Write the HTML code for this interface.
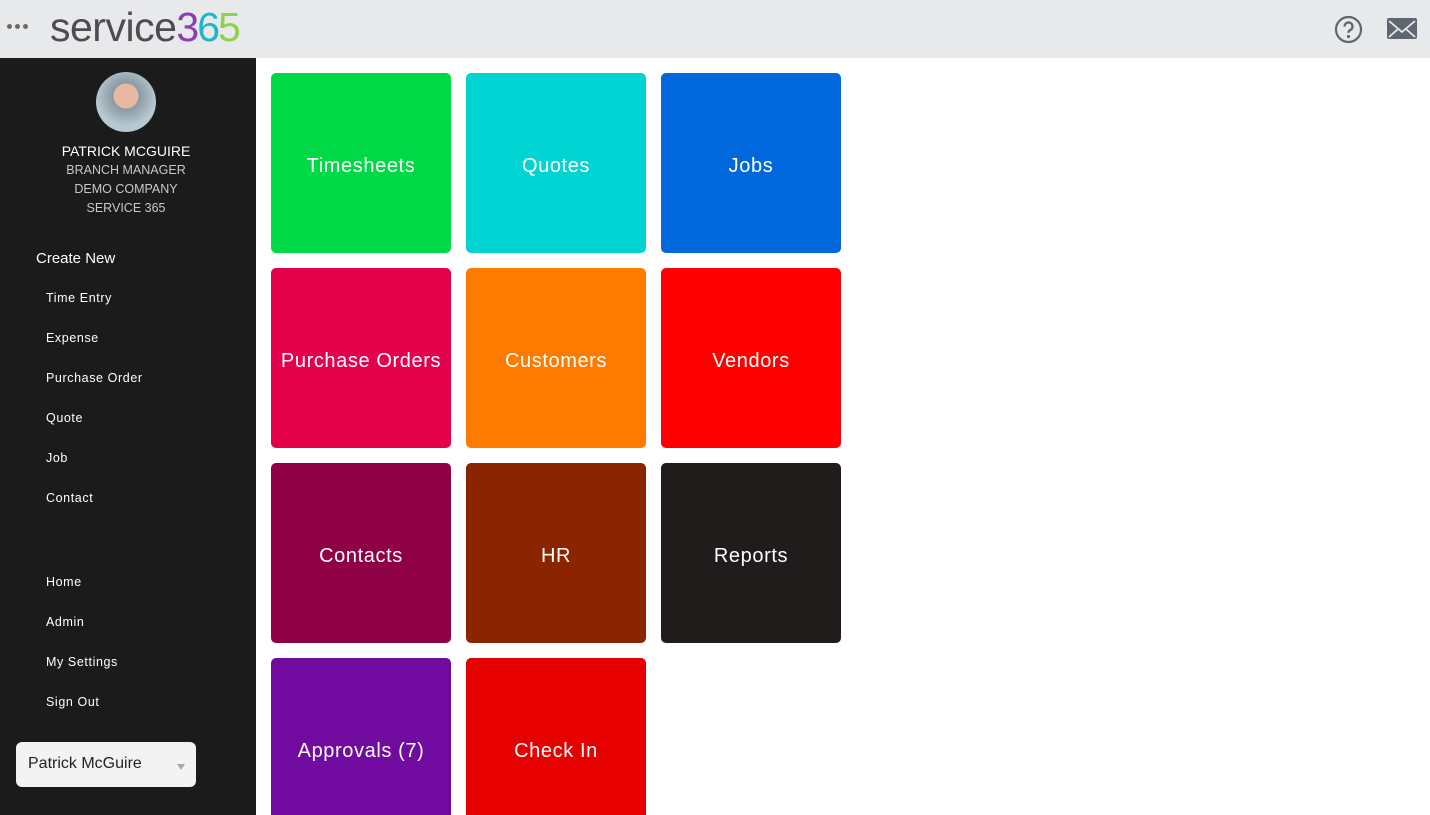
<!DOCTYPE html>
<html style="width:1430px;height:815px;overflow:hidden"><head><meta charset="utf-8"><style>
*{margin:0;padding:0;box-sizing:border-box}
body{width:1430px;height:815px;overflow:hidden;background:#fff;font-family:"Liberation Sans",sans-serif;position:relative}
.top{position:absolute;left:0;top:0;width:1430px;height:58px;background:#e8e9eb}
.dots{position:absolute;left:7px;top:24px;height:5px;line-height:0}
.dots span{display:inline-block;width:5px;height:5px;border-radius:50%;background:#6b6b6b;margin-right:3px;vertical-align:top}
.logo{position:absolute;left:50px;top:4px;font-family:"Liberation Sans",sans-serif;font-size:41px;color:#4d4d4f;letter-spacing:-0.5px}
.side{position:absolute;left:0;top:58px;width:256px;height:757px;background:#1b1b1b;color:#fff}
.av{position:absolute;left:96px;top:14px;width:60px;height:60px;border-radius:50%;background:radial-gradient(circle at 50% 40%,#e8b9a0 0 12px,#8a9aa5 13px,#b7c8d0 30px)}
.name{position:absolute;left:0;width:252px;text-align:center;top:85px;font-size:14px}
.sub{position:absolute;left:0;width:252px;text-align:center;font-size:12.5px;color:#c8c8c8}
.cn{position:absolute;left:36px;top:192px;font-size:15px}
.it{position:absolute;left:46px;font-size:12.5px;letter-spacing:0.6px}
.sel{position:absolute;left:16px;top:684px;width:180px;height:45px;background:#f3f3f3;border-radius:6px;color:#222;font-family:"Liberation Sans",sans-serif;font-size:16px;padding:13px 0 0 12px}
.sel i{position:absolute;right:11px;top:22px;border:4px solid transparent;border-top:6px solid #aaa}
.t{position:absolute;width:180px;height:180px;border-radius:5px;color:#fff;font-size:20px;letter-spacing:0.6px;display:flex;align-items:center;justify-content:center;padding-top:7px}
</style></head><body>
<div class="top">
<div class="dots"><span></span><span></span><span></span></div>
<div class="logo">service<span style="color:#8b3fb0;letter-spacing:-2px">3</span><span style="color:#1eb6c8;letter-spacing:-2px">6</span><span style="color:#8dd24a">5</span></div>
<svg style="position:absolute;left:1334px;top:15px" width="29" height="29" viewBox="0 0 29 29"><circle cx="14.5" cy="14.5" r="12.5" fill="none" stroke="#5f6670" stroke-width="2.2"/><path d="M10.5 11.5a4 4 0 1 1 5.5 3.7c-1.2.6-1.5 1.2-1.5 2.6" fill="none" stroke="#5f6670" stroke-width="2.4"/><circle cx="14.5" cy="21.5" r="1.6" fill="#5f6670"/></svg>
<svg style="position:absolute;left:1387px;top:18px" width="30" height="21" viewBox="0 0 30 21"><rect width="30" height="21" rx="2" fill="#5f6670"/><path d="M2 3l13 11L28 3M2 19l9-8M28 19l-9-8" fill="none" stroke="#e8e9eb" stroke-width="1.8"/></svg>
</div>
<div class="side">
<div class="av"></div>
<div class="name">PATRICK MCGUIRE</div>
<div class="sub" style="top:105px">BRANCH MANAGER</div>
<div class="sub" style="top:124px">DEMO COMPANY</div>
<div class="sub" style="top:143px">SERVICE 365</div>
<div class="cn">Create New</div>
<div class="it" style="top:233px">Time Entry</div>
<div class="it" style="top:273px">Expense</div>
<div class="it" style="top:313px">Purchase Order</div>
<div class="it" style="top:353px">Quote</div>
<div class="it" style="top:393px">Job</div>
<div class="it" style="top:433px">Contact</div>
<div class="it" style="top:517px">Home</div>
<div class="it" style="top:557px">Admin</div>
<div class="it" style="top:597px">My Settings</div>
<div class="it" style="top:637px">Sign Out</div>
<div class="sel">Patrick McGuire<i></i></div>
</div>
<div class="t" style="left:271px;top:73px;background:#00d946">Timesheets</div>
<div class="t" style="left:466px;top:73px;background:#00d4d2">Quotes</div>
<div class="t" style="left:661px;top:73px;background:#0068dc">Jobs</div>
<div class="t" style="left:271px;top:268px;background:#e5004b">Purchase Orders</div>
<div class="t" style="left:466px;top:268px;background:#ff7b00">Customers</div>
<div class="t" style="left:661px;top:268px;background:#ff0000">Vendors</div>
<div class="t" style="left:271px;top:463px;background:#900045">Contacts</div>
<div class="t" style="left:466px;top:463px;background:#8b2500">HR</div>
<div class="t" style="left:661px;top:463px;background:#201c1c">Reports</div>
<div class="t" style="left:271px;top:658px;background:#710ba0">Approvals (7)</div>
<div class="t" style="left:466px;top:658px;background:#e60000">Check In</div>
</body></html>
